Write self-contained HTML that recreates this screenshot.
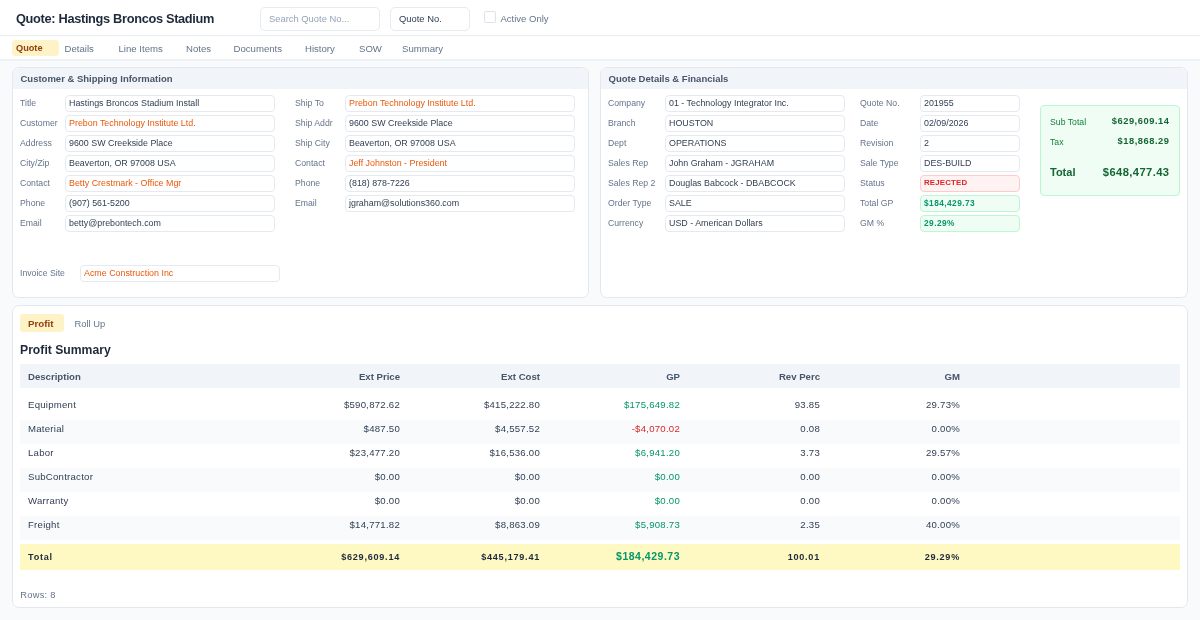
<!DOCTYPE html>
<html><head><meta charset="utf-8">
<style>
*{box-sizing:border-box;margin:0;padding:0}
html,body{width:1200px;height:620px;overflow:hidden;background:#f8fafc;font-family:"Liberation Sans",sans-serif;color:#334155}
.a{position:absolute;white-space:nowrap}
#hdr{position:absolute;left:0;top:0;width:1200px;height:36px;background:#fff;border-bottom:1px solid #e9edf2}
#tabs{position:absolute;left:0;top:36px;width:1200px;height:25px;background:#fff;border-bottom:2px solid #eef1f5}
.title{left:16px;top:11px;font-size:12.8px;letter-spacing:-0.33px;font-weight:bold;color:#1e293b;line-height:16px}
.hin{position:absolute;top:7px;height:23.5px;border:1px solid #e6ebf1;border-radius:5px;background:#fff;font-size:9.4px;line-height:21px;padding-left:8px}
.tab{position:absolute;top:0;font-size:9.6px;line-height:16px;color:#64748b;margin-top:1px}
.panel{position:absolute;background:#fff;border:1px solid #e3e8ef;border-radius:7px;overflow:hidden}
.ph{position:absolute;left:0;top:0;right:0;height:21px;background:#f1f5f9}
.ph span{position:absolute;left:7.5px;top:5.2px;font-size:9.5px;font-weight:bold;color:#475569;line-height:12px}
.lb{position:absolute;font-size:8.7px;color:#64748b;line-height:15px}
.in{position:absolute;height:17px;border:1px solid #e5e9f0;border-radius:4px;background:#fff;font-size:8.9px;line-height:14px;padding-left:3px;margin-top:-0.6px;color:#334155;white-space:nowrap;overflow:hidden}
.or{color:#ea580c}
.rej{background:#fef2f2;border-color:#fecaca;color:#dc2626;font-weight:bold;font-size:7.9px;letter-spacing:0.15px}
.gp{background:#f0fdf4;border-color:#bbf7d0;color:#059669;font-weight:bold;font-size:8.3px;letter-spacing:0.45px}
table{position:absolute;border-collapse:collapse;table-layout:fixed}
td,th{white-space:nowrap;padding:0 8px;font-size:9.6px}
th{height:24px;background:#f1f5f9;color:#475569;font-weight:bold;text-align:right;padding-top:1px;letter-spacing:0}
td{height:24px;text-align:right;color:#334155;padding-bottom:6.5px;letter-spacing:0.25px}
td:first-child,th:first-child{text-align:left}
tr.s td{background:#f8fafc}
tr.t td{background:#fef9c3;font-weight:bold;height:26px;color:#1e293b;font-size:9.1px;letter-spacing:0.75px;padding-bottom:0;padding-top:0}
.g{color:#059669}.r{color:#dc2626}
tr.t td.g{color:#059669;font-size:10.5px;letter-spacing:0.5px;padding-top:0;padding-bottom:1.5px}
</style></head><body><div style="position:absolute;left:0;top:0;width:1200px;height:620px;will-change:transform;background:transparent">
<div id="hdr">
  <div class="a title">Quote: Hastings Broncos Stadium</div>
  <div class="hin" style="left:260px;width:120px;color:#94a3b8">Search Quote No...</div>
  <div class="hin" style="left:390px;width:80px;color:#334155">Quote No.</div>
  <div class="a" style="left:484.3px;top:11.3px;width:11.3px;height:11.3px;border:1.4px solid #dde3ea;border-radius:2px;background:#fff"></div>
  <div class="a" style="left:500.5px;top:12px;font-size:9.5px;line-height:14px;color:#64748b">Active Only</div>
</div>
<div id="tabs">
  <div class="a" style="left:12px;top:4px;width:46.5px;height:16px;background:#fef3c7;border-radius:3.5px"></div>
  <div class="tab" style="left:16px;top:3px;color:#92400e;font-weight:bold;font-size:9.2px">Quote</div>
  <div class="tab" style="left:64.5px;top:4px">Details</div>
  <div class="tab" style="left:118.5px;top:4px">Line Items</div>
  <div class="tab" style="left:186px;top:4px">Notes</div>
  <div class="tab" style="left:233.5px;top:4px">Documents</div>
  <div class="tab" style="left:305px;top:4px">History</div>
  <div class="tab" style="left:359px;top:4px">SOW</div>
  <div class="tab" style="left:402px;top:4px">Summary</div>
</div>

<!-- Panel 1 -->
<div class="panel" style="left:12px;top:67px;width:577px;height:231px">
  <div class="ph"><span>Customer &amp; Shipping Information</span></div>
</div>
<div id="p1">
  <div class="lb" style="left:20px;top:96px">Title</div>
  <div class="in" style="left:65px;top:96px;width:210px">Hastings Broncos Stadium Install</div>
  <div class="lb" style="left:20px;top:116px">Customer</div>
  <div class="in or" style="left:65px;top:116px;width:210px">Prebon Technology Institute Ltd.</div>
  <div class="lb" style="left:20px;top:136px">Address</div>
  <div class="in" style="left:65px;top:136px;width:210px">9600 SW Creekside Place</div>
  <div class="lb" style="left:20px;top:156px">City/Zip</div>
  <div class="in" style="left:65px;top:156px;width:210px">Beaverton, OR 97008 USA</div>
  <div class="lb" style="left:20px;top:176px">Contact</div>
  <div class="in or" style="left:65px;top:176px;width:210px">Betty Crestmark - Office Mgr</div>
  <div class="lb" style="left:20px;top:196px">Phone</div>
  <div class="in" style="left:65px;top:196px;width:210px">(907) 561-5200</div>
  <div class="lb" style="left:20px;top:216px">Email</div>
  <div class="in" style="left:65px;top:216px;width:210px">betty@prebontech.com</div>

  <div class="lb" style="left:295px;top:96px">Ship To</div>
  <div class="in or" style="left:345px;top:96px;width:230px">Prebon Technology Institute Ltd.</div>
  <div class="lb" style="left:295px;top:116px">Ship Addr</div>
  <div class="in" style="left:345px;top:116px;width:230px">9600 SW Creekside Place</div>
  <div class="lb" style="left:295px;top:136px">Ship City</div>
  <div class="in" style="left:345px;top:136px;width:230px">Beaverton, OR 97008 USA</div>
  <div class="lb" style="left:295px;top:156px">Contact</div>
  <div class="in or" style="left:345px;top:156px;width:230px">Jeff Johnston - President</div>
  <div class="lb" style="left:295px;top:176px">Phone</div>
  <div class="in" style="left:345px;top:176px;width:230px">(818) 878-7226</div>
  <div class="lb" style="left:295px;top:196px">Email</div>
  <div class="in" style="left:345px;top:196px;width:230px">jgraham@solutions360.com</div>

  <div class="lb" style="left:20px;top:265.8px">Invoice Site</div>
  <div class="in or" style="left:80px;top:265.8px;width:200px">Acme Construction Inc</div>
</div>

<!-- Panel 2 -->
<div class="panel" style="left:600px;top:67px;width:588px;height:231px">
  <div class="ph"><span>Quote Details &amp; Financials</span></div>
</div>
<div id="p2">
  <div class="lb" style="left:608px;top:96px">Company</div>
  <div class="in" style="left:665px;top:96px;width:180px">01 - Technology Integrator Inc.</div>
  <div class="lb" style="left:608px;top:116px">Branch</div>
  <div class="in" style="left:665px;top:116px;width:180px">HOUSTON</div>
  <div class="lb" style="left:608px;top:136px">Dept</div>
  <div class="in" style="left:665px;top:136px;width:180px">OPERATIONS</div>
  <div class="lb" style="left:608px;top:156px">Sales Rep</div>
  <div class="in" style="left:665px;top:156px;width:180px">John Graham - JGRAHAM</div>
  <div class="lb" style="left:608px;top:176px">Sales Rep 2</div>
  <div class="in" style="left:665px;top:176px;width:180px">Douglas Babcock - DBABCOCK</div>
  <div class="lb" style="left:608px;top:196px">Order Type</div>
  <div class="in" style="left:665px;top:196px;width:180px">SALE</div>
  <div class="lb" style="left:608px;top:216px">Currency</div>
  <div class="in" style="left:665px;top:216px;width:180px">USD - American Dollars</div>

  <div class="lb" style="left:860px;top:96px">Quote No.</div>
  <div class="in" style="left:920px;top:96px;width:100px">201955</div>
  <div class="lb" style="left:860px;top:116px">Date</div>
  <div class="in" style="left:920px;top:116px;width:100px">02/09/2026</div>
  <div class="lb" style="left:860px;top:136px">Revision</div>
  <div class="in" style="left:920px;top:136px;width:100px">2</div>
  <div class="lb" style="left:860px;top:156px">Sale Type</div>
  <div class="in" style="left:920px;top:156px;width:100px">DES-BUILD</div>
  <div class="lb" style="left:860px;top:176px">Status</div>
  <div class="in rej" style="left:920px;top:176px;width:100px">REJECTED</div>
  <div class="lb" style="left:860px;top:196px">Total GP</div>
  <div class="in gp" style="left:920px;top:196px;width:100px">$184,429.73</div>
  <div class="lb" style="left:860px;top:216px">GM %</div>
  <div class="in gp" style="left:920px;top:216px;width:100px">29.29%</div>

  <div class="a" style="left:1040px;top:105px;width:140px;height:91px;background:#f0fdf4;border:1px solid #bbf7d0;border-radius:4px"></div>
  <div class="a" style="left:1050px;top:116px;font-size:8.7px;line-height:12px;color:#15803d">Sub Total</div>
  <div class="a" style="left:1090px;top:114.5px;width:79.5px;text-align:right;font-size:9.3px;letter-spacing:0.55px;font-weight:bold;line-height:12px;color:#166534">$629,609.14</div>
  <div class="a" style="left:1050px;top:136px;font-size:8.7px;line-height:12px;color:#15803d">Tax</div>
  <div class="a" style="left:1090px;top:134.5px;width:79.5px;text-align:right;font-size:9.3px;letter-spacing:0.55px;font-weight:bold;line-height:12px;color:#166534">$18,868.29</div>
  <div class="a" style="left:1050px;top:165px;font-size:11px;font-weight:bold;line-height:14px;color:#166534">Total</div>
  <div class="a" style="left:1080px;top:165px;width:89.4px;text-align:right;font-size:11.2px;letter-spacing:0.4px;font-weight:bold;line-height:14px;color:#166534">$648,477.43</div>
</div>

<!-- Panel 3 -->
<div class="panel" style="left:12px;top:305px;width:1176px;height:303px"></div>
<div class="a" style="left:20px;top:314px;width:44px;height:18px;background:#fef3c7;border-radius:3px"></div>
<div class="a" style="left:28px;top:317.8px;font-size:9.8px;line-height:12px;font-weight:bold;color:#92400e">Profit</div>
<div class="a" style="left:74.5px;top:317.5px;font-size:9.4px;line-height:12px;color:#64748b">Roll Up</div>
<div class="a" style="left:20px;top:342.8px;font-size:12.2px;line-height:14px;font-weight:bold;color:#1e293b">Profit Summary</div>

<table style="left:20px;top:364px;width:1160px">
<colgroup><col style="width:248px"><col style="width:140px"><col style="width:140px"><col style="width:140px"><col style="width:140px"><col style="width:140px"><col></colgroup>
<tr><th>Description</th><th>Ext Price</th><th>Ext Cost</th><th>GP</th><th>Rev Perc</th><th>GM</th><th></th></tr>
<tr><td style="height:8px;padding:0" colspan="7"></td></tr>
<tr><td>Equipment</td><td>$590,872.62</td><td>$415,222.80</td><td class="g">$175,649.82</td><td>93.85</td><td>29.73%</td><td></td></tr>
<tr class="s"><td>Material</td><td>$487.50</td><td>$4,557.52</td><td class="r">-$4,070.02</td><td>0.08</td><td>0.00%</td><td></td></tr>
<tr><td>Labor</td><td>$23,477.20</td><td>$16,536.00</td><td class="g">$6,941.20</td><td>3.73</td><td>29.57%</td><td></td></tr>
<tr class="s"><td>SubContractor</td><td>$0.00</td><td>$0.00</td><td class="g">$0.00</td><td>0.00</td><td>0.00%</td><td></td></tr>
<tr><td>Warranty</td><td>$0.00</td><td>$0.00</td><td class="g">$0.00</td><td>0.00</td><td>0.00%</td><td></td></tr>
<tr class="s"><td>Freight</td><td>$14,771.82</td><td>$8,863.09</td><td class="g">$5,908.73</td><td>2.35</td><td>40.00%</td><td></td></tr>
<tr><td style="height:4px;padding:0" colspan="7"></td></tr>
<tr class="t"><td>Total</td><td>$629,609.14</td><td>$445,179.41</td><td class="g">$184,429.73</td><td>100.01</td><td>29.29%</td><td></td></tr>
</table>
<div class="a" style="left:20.3px;top:589px;font-size:9.3px;letter-spacing:0.25px;line-height:12px;color:#64748b">Rows: 8</div>
</div></body></html>
